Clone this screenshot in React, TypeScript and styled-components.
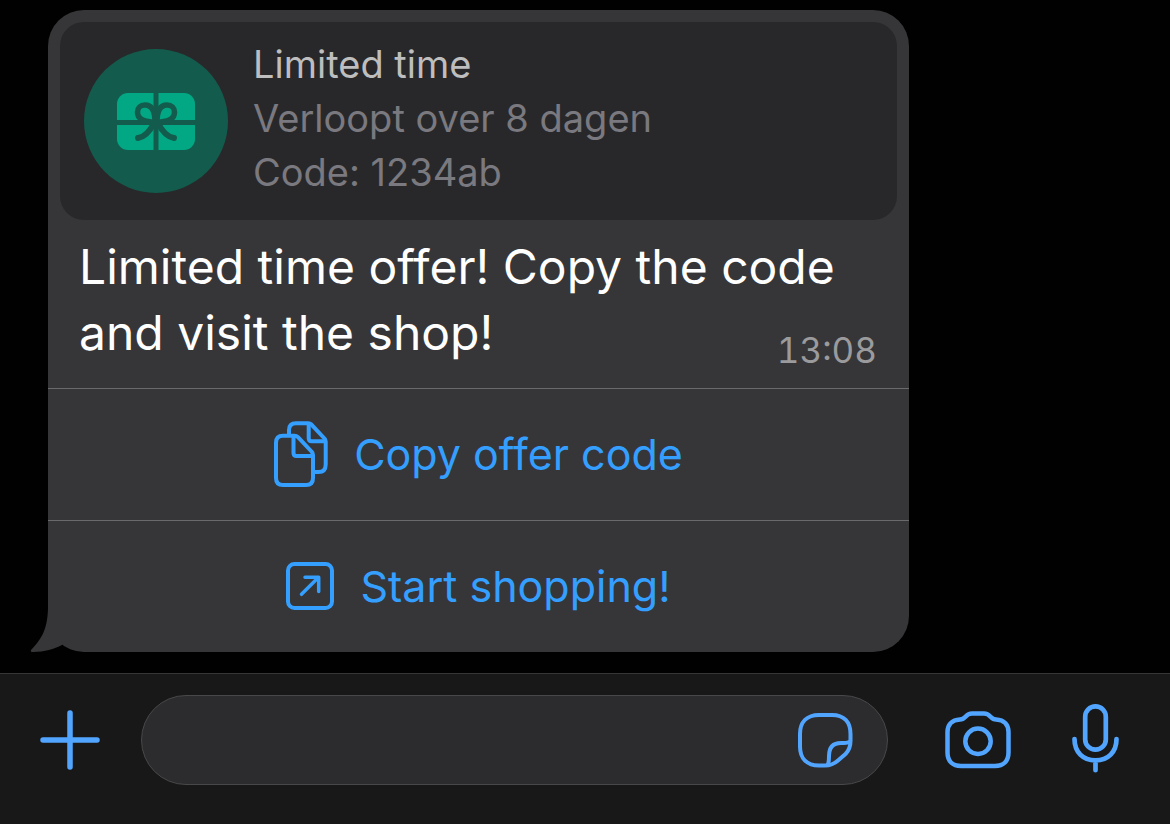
import React from "react";
import styled, { createGlobalStyle } from "styled-components";

const GlobalStyle = createGlobalStyle`
  * { box-sizing: border-box; }
  body {
    margin: 0;
    background: #000100;
    font-family: Inter, "Liberation Sans", sans-serif;
  }
  svg { display: block; flex: none; }
  p { margin: 0; }
`;

const Page = styled.div`
  min-height: 100vh;
  display: flex;
  flex-direction: column;
`;

const Chat = styled.main`
  flex: 1;
  padding: 10px 261px 21px 48px;
`;

const Bubble = styled.article`
  position: relative;
  background: #363638;
  border-radius: 36px;
  padding-top: 12px;
`;

const Tail = styled.svg`
  position: absolute;
  left: -18px;
  bottom: 0;
`;

const OfferCard = styled.section`
  margin: 0 12px;
  min-height: 198px;
  padding: 12px 24px;
  display: flex;
  align-items: center;
  gap: 25px;
  background: #28282a;
  border-radius: 24px;
`;

const OfferBadge = styled.div`
  width: 144px;
  height: 144px;
  flex: none;
  border-radius: 50%;
  background: #135c4d;
  display: flex;
  align-items: center;
  justify-content: center;
`;

const OfferText = styled.div`
  padding-bottom: 6px;
`;

const OfferLine = styled.p<{ $title?: boolean }>`
  font-size: 38px;
  line-height: 54px;
  color: ${(p) => (p.$title ? "#bebebe" : "#7a797f")};
`;

const Message = styled.p`
  padding: 14px 32px 22px 31px;
  font-size: 48px;
  line-height: 66px;
  color: #fff;
`;

const Time = styled.time`
  float: right;
  margin-top: 32px;
  font-size: 35px;
  line-height: 36px;
  font-variant-numeric: tabular-nums;
  color: #9b9b9d;
`;

const Button = styled.button`
  padding: 0;
  border: 0;
  background: none;
  font-family: inherit;
  cursor: pointer;
`;

const ActionButton = styled(Button)`
  width: 100%;
  height: 132px;
  padding-bottom: 2px;
  border-top: 1px solid #6a6a6c;
  display: flex;
  align-items: center;
  justify-content: center;
  gap: 26px;
  font-size: 43px;
  color: #359fff;
`;

const Composer = styled.footer`
  border-top: 1px solid #363638;
  background: #181818;
  padding: 21px 51px 39px 40px;
  display: flex;
  align-items: center;
`;

const IconButton = styled(Button)`
  flex: none;
  color: #52a5ff;
`;

const Field = styled.div`
  flex: 1;
  min-width: 0;
  height: 90px;
  margin: 0 57px 0 41px;
  padding: 0 34px;
  display: flex;
  align-items: center;
  border: 1px solid #48484a;
  border-radius: 45px;
  background: #2c2c2e;
`;

const TextInput = styled.input`
  flex: 1;
  min-width: 0;
  height: 60px;
  border: 0;
  outline: 0;
  background: transparent;
  color: #fff;
  font-family: inherit;
  font-size: 38px;
`;

const MediaActions = styled.div`
  display: flex;
  align-items: center;
  gap: 61px;
`;

const GiftIcon = () => (
  <svg width="78" height="58" viewBox="0 0 78 58" aria-hidden="true">
    <rect y="1" width="78" height="57" rx="11" fill="#02a884" />
    <g fill="none" stroke="#135c4d" strokeLinecap="round">
      <path d="M39 0V58M0 30.500H78" strokeWidth="5" strokeLinecap="butt" />
      <path d="M38 30C26 30 20.500 26 20.500 20C20.500 16 23.500 13 28 13C34.500 13 38 19 38 30Z" strokeWidth="5.500" />
      <path d="M40 30C52 30 57.500 26 57.500 20C57.500 16 54.500 13 50 13C43.500 13 40 19 40 30Z" strokeWidth="5.500" />
      <path d="M37 31C33 39 28.500 45 21 46M41 31C45 39 49.500 45 57 46" strokeWidth="6" />
    </g>
  </svg>
);

const CopyIcon = () => (
  <svg width="54" height="66" viewBox="0 0 54 66" fill="none" stroke="currentColor" strokeWidth="4" strokeLinejoin="round" aria-hidden="true">
    <path d="M15 14.700V9Q15 2.200 22 2.200H34.500Q36 2.200 37 3.200L50.500 17.500Q51.700 19 51.700 20.500V43.500Q51.700 51 44.500 51H41" />
    <path d="M34.700 2.500V17.300Q34.700 20.300 37.700 20.300H51.500" />
    <path d="M9 14.700H20.500Q22.500 14.700 24 16.200L37.500 30.500Q39 32 39 34V57Q39 64 32 64H9Q2 64 2 57V21.700Q2 14.700 9 14.700Z" />
    <path d="M19.500 15V32Q19.500 35 22.500 35H38.500" />
  </svg>
);

const OpenIcon = () => (
  <svg width="48" height="48" viewBox="0 0 48 48" fill="none" stroke="currentColor" strokeWidth="4" aria-hidden="true">
    <rect x="2" y="2" width="44" height="44" rx="6.500" />
    <path d="M15.500 32.300L32.600 15.300M19 15.300H32.700V29.500" strokeWidth="3.500" strokeLinecap="round" strokeLinejoin="round" />
  </svg>
);

const PlusIcon = () => (
  <svg width="60" height="60" viewBox="0 0 60 60" stroke="currentColor" strokeWidth="5.500" strokeLinecap="round" aria-hidden="true">
    <path d="M30 3V57M3 30H57" />
  </svg>
);

const StickerIcon = () => (
  <svg width="55" height="56" viewBox="0 0 55 56" fill="none" stroke="currentColor" strokeWidth="4" strokeLinejoin="round" aria-hidden="true">
    <path d="M21 3H34C46 3 52.500 10 52.500 22V29C52.500 35 51.500 38 47.500 42L40 48.500C35.500 52.500 32 53.500 27 53.500H21C9 53.500 2 46.500 2 34.500V22C2 10 9 3 21 3Z" />
    <path d="M29.500 53C31 51 31 48 31 44C31 35.500 35 31 43 31C47.500 31 50.500 31.500 52 29" />
  </svg>
);

const CameraIcon = () => (
  <svg width="66" height="58" viewBox="0 0 66 58" fill="none" stroke="currentColor" strokeWidth="4.500" strokeLinejoin="round" aria-hidden="true">
    <path d="M27 2.500H39C46 2.500 45 8.500 51 8.500C59.500 9 63.500 14 63.500 21V41.500C63.500 50 58.500 55 50 55H16C7.500 55 2.500 50 2.500 41.500V21C2.500 14 6.500 9 15 8.500C21 8.500 20 2.500 27 2.500Z" />
    <circle cx="33" cy="30.300" r="12.700" />
  </svg>
);

const MicIcon = () => (
  <svg width="47" height="72" viewBox="0 0 47 72" fill="none" stroke="currentColor" strokeWidth="4.700" strokeLinecap="round" aria-hidden="true">
    <rect x="13.200" y="2.400" width="20.600" height="43.300" rx="10.300" />
    <path d="M2.500 35C2.500 48 11 56.400 23.500 56.400S44.500 48 44.500 35M23.500 56.400V66.200" />
  </svg>
);

export default function App() {
  return (
    <Page>
      <GlobalStyle />
      <Chat>
        <Bubble>
          <Tail width="50" height="46" viewBox="0 0 50 46" aria-hidden="true">
            <path d="M18 0C18 22 12 33 1 44Q0 46 3 46C15 46 24 43 32 39L50 20V0Z" fill="#363638" />
          </Tail>
          <OfferCard>
            <OfferBadge>
              <GiftIcon />
            </OfferBadge>
            <OfferText>
              <OfferLine $title>Limited time</OfferLine>
              <OfferLine>Verloopt over 8 dagen</OfferLine>
              <OfferLine>Code: 1234ab</OfferLine>
            </OfferText>
          </OfferCard>
          <Message>
            Limited time offer! Copy the code and visit the shop!
            <Time>13:08</Time>
          </Message>
          <ActionButton type="button">
            <CopyIcon />
            Copy offer code
          </ActionButton>
          <ActionButton type="button">
            <OpenIcon />
            Start shopping!
          </ActionButton>
        </Bubble>
      </Chat>
      <Composer>
        <IconButton type="button" aria-label="Add attachment">
          <PlusIcon />
        </IconButton>
        <Field>
          <TextInput type="text" aria-label="Message" />
          <IconButton type="button" aria-label="Stickers">
            <StickerIcon />
          </IconButton>
        </Field>
        <MediaActions>
          <IconButton type="button" aria-label="Camera">
            <CameraIcon />
          </IconButton>
          <IconButton type="button" aria-label="Record voice message">
            <MicIcon />
          </IconButton>
        </MediaActions>
      </Composer>
    </Page>
  );
}
